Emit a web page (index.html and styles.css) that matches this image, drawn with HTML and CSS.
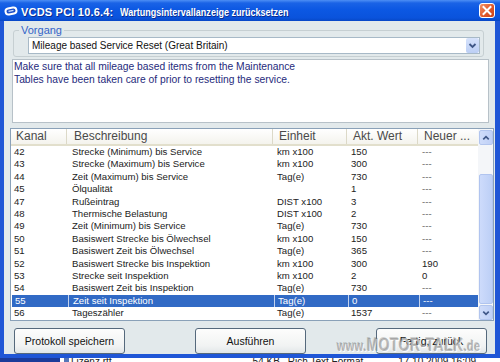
FILE: index.html
```html
<!DOCTYPE html>
<html lang="de">
<head>
<meta charset="utf-8">
<title>VCDS PCI 10.6.4</title>
<link rel="stylesheet" href="styles.css">
</head>
<body>
<div class="titlebar">
  <svg class="app-icon" viewBox="0 0 14 10" width="14" height="10">
    <rect x="1.5" y="2" width="11" height="6" rx="3" transform="rotate(-12 7 5)" fill="#1d4fc8" stroke="#fff" stroke-width="2"/>
    <line x1="4.5" y1="5.4" x2="9.5" y2="4.4" stroke="#cfe0ff" stroke-width="1.2"/>
  </svg>
  <span class="title"><span class="title-app">VCDS PCI 10.6.4:</span> <span class="title-dlg">Wartungsintervallanzeige zurücksetzen</span></span>
  <span class="close">
    <svg viewBox="0 0 14 13" width="14" height="13"><path d="M3.5 3 L10.5 10 M10.5 3 L3.5 10" stroke="#fff" stroke-width="2" stroke-linecap="square"/></svg>
  </span>
</div>
<div class="window">
  <fieldset class="group">
    <legend>Vorgang</legend>
    <div class="combo">
      <span class="combo-text">Mileage based Service Reset (Great Britain)</span>
      <span class="combo-btn"><svg viewBox="0 0 13 15" width="13" height="15"><path d="M3.5 6 L6.5 9 L9.5 6" fill="none" stroke="#3f5787" stroke-width="1.8"/></svg></span>
    </div>
  </fieldset>
  <div class="notes">Make sure that all mileage based items from the Maintenance<br>Tables have been taken care of prior to resetting the service.</div>
  <div class="list">
    <div class="list-main">
      <div class="row head">
        <div class="c">Kanal</div><div class="c">Beschreibung</div><div class="c">Einheit</div><div class="c">Akt. Wert</div><div class="c">Neuer ...</div>
      </div>
      <div class="row"><div class="c">42</div><div class="c">Strecke (Minimum) bis Service</div><div class="c">km x100</div><div class="c">150</div><div class="c dash">---</div></div>
      <div class="row"><div class="c">43</div><div class="c">Strecke (Maximum) bis Service</div><div class="c">km x100</div><div class="c">300</div><div class="c dash">---</div></div>
      <div class="row"><div class="c">44</div><div class="c">Zeit (Maximum) bis Service</div><div class="c">Tag(e)</div><div class="c">730</div><div class="c dash">---</div></div>
      <div class="row"><div class="c">45</div><div class="c">Ölqualität</div><div class="c"></div><div class="c">1</div><div class="c dash">---</div></div>
      <div class="row"><div class="c">47</div><div class="c">Rußeintrag</div><div class="c">DIST x100</div><div class="c">3</div><div class="c dash">---</div></div>
      <div class="row"><div class="c">48</div><div class="c">Thermische Belastung</div><div class="c">DIST x100</div><div class="c">2</div><div class="c dash">---</div></div>
      <div class="row"><div class="c">49</div><div class="c">Zeit (Minimum) bis Service</div><div class="c">Tag(e)</div><div class="c">730</div><div class="c dash">---</div></div>
      <div class="row"><div class="c">50</div><div class="c">Basiswert Strecke bis Ölwechsel</div><div class="c">km x100</div><div class="c">150</div><div class="c dash">---</div></div>
      <div class="row"><div class="c">51</div><div class="c">Basiswert Zeit bis Ölwechsel</div><div class="c">Tag(e)</div><div class="c">365</div><div class="c dash">---</div></div>
      <div class="row"><div class="c">52</div><div class="c">Basiswert Strecke bis Inspektion</div><div class="c">km x100</div><div class="c">300</div><div class="c">190</div></div>
      <div class="row"><div class="c">53</div><div class="c">Strecke seit Inspektion</div><div class="c">km x100</div><div class="c">2</div><div class="c">0</div></div>
      <div class="row"><div class="c">54</div><div class="c">Basiswert Zeit bis Inspektion</div><div class="c">Tag(e)</div><div class="c">730</div><div class="c dash">---</div></div>
      <div class="row sel"><div class="c">55</div><div class="c">Zeit seit Inspektion</div><div class="c">Tag(e)</div><div class="c">0</div><div class="c dash">---</div></div>
      <div class="row"><div class="c">56</div><div class="c">Tageszähler</div><div class="c">Tag(e)</div><div class="c">1537</div><div class="c dash">---</div></div>
    </div>
    <div class="scrollbar">
      <div class="sb-btn"><svg viewBox="0 0 13 14" width="13" height="14"><path d="M3.5 8.5 L6.5 5.5 L9.5 8.5" fill="none" stroke="#3f5787" stroke-width="1.8"/></svg></div>
      <div class="sb-track"><div class="sb-thumb"></div></div>
      <div class="sb-btn"><svg viewBox="0 0 13 14" width="13" height="14"><path d="M3.5 5.5 L6.5 8.5 L9.5 5.5" fill="none" stroke="#3f5787" stroke-width="1.8"/></svg></div>
    </div>
  </div>
  <div class="buttons">
    <div class="btn">Protokoll speichern</div>
    <div class="btn">Ausführen</div>
    <div class="btn">Fertig, zurück</div>
  </div>
</div>
<div class="strip">
  <div class="strip-left"></div>
  <div class="strip-main">
    <span class="file-icon"></span><span class="fname">Lizenz.rtf</span>
    <span class="fsize">54 KB</span><span class="ftype">Rich Text Format</span><span class="fdate">17.10.2009 16:09</span>
  </div>
</div>
<div class="watermark"><span class="www">www.</span>MOTOR-TALK<span class="www">.de</span></div>
</body>
</html>
```

FILE: styles.css
```css
* { box-sizing: border-box; }
html, body { margin: 0; padding: 0; }
body {
  width: 500px;
  height: 362px;
  overflow: hidden;
  background: #fff;
  font-family: "Liberation Sans", Arial, sans-serif;
  position: relative;
}

/* title bar */
.titlebar {
  height: 21px;
  display: flex;
  align-items: center;
  padding: 0 5px 0 4px;
  background: linear-gradient(#4d8ff5 0, #1a63e6 3px, #0c58e3 45%, #0a53dc 85%, #0747c6 100%);
}
.app-icon { flex: none; margin-right: 3px; margin-top: 1px; }
.title {
  flex: 1;
  color: #fff;
  font-weight: bold;
  font-size: 11px;
  white-space: nowrap;
  text-shadow: 1px 1px 0 #0a2c8e;
  padding-top: 2px;
}
.title-app { letter-spacing: 0.2px; }
.title-dlg {
  display: inline-block;
  margin-left: 3px;
  transform: scaleX(0.82);
  transform-origin: left center;
}
.close {
  flex: none;
  width: 16px;
  height: 15px;
  border: 1px solid #fff;
  border-radius: 3px;
  background: linear-gradient(135deg, #f3956b 0, #e0582a 55%, #c7411a 100%);
  display: flex;
  align-items: center;
  justify-content: center;
}

/* window body */
.window {
  border: solid #1f56d6;
  border-width: 0 5px 4px 4px;
  background: #e2e9eb;
  padding-top: 3px;
  height: 337px;
}

.group {
  margin: 0 11px 0 9px;
  padding: 0 3px 2px 0;
  border: 1px solid #c6cfd2;
  border-radius: 3px;
  min-width: 0;
}
.group legend {
  margin-left: 5px;
  padding: 0 2px;
  font-size: 11px;
  line-height: 12px;
  color: #3464c8;
}
.combo {
  margin: 1px 0 0 14px;
  height: 17px;
  background: #fff;
  border: 1px solid #a7b9c7;
  display: flex;
  align-items: center;
  justify-content: space-between;
}
.combo-text {
  font-size: 10px;
  color: #111;
  padding-left: 3px;
}
.combo-btn {
  width: 13px;
  height: 15px;
  background: linear-gradient(#d6e2fb, #bccff5);
  border-radius: 2px;
  display: flex;
}

.notes {
  margin: 2px 6px 0 8px;
  height: 64px;
  background: #fff;
  border: 1px solid #b7c1c8;
  padding: 0 0 0 1px;
  font-size: 10.3px;
  line-height: 13.3px;
  color: #262a7c;
}

/* list view */
.list {
  margin: 5px 1px 0 6px;
  height: 193px;
  border: 1px solid #8aa1b8;
  background: #fff;
  display: flex;
}
.list-main {
  width: 467px;
  flex: none;
  overflow: hidden;
}
.row {
  display: grid;
  grid-template-columns: 56px 206px 74px 71px 60px;
  height: 12.4px;
  line-height: 12.4px;
  font-size: 9.6px;
  color: #222;
}
.row .c {
  padding-left: 4px;
  white-space: nowrap;
  overflow: hidden;
}
.row .c:first-child { padding-left: 3px; }
.row .c:nth-child(2) { padding-left: 5px; }
.row .dash { color: #666; }

.row.head {
  height: 17px;
  line-height: 15px;
  font-size: 12px;
  color: #4a4a4a;
  background: linear-gradient(#ffffff, #f4f3ed);
  border-bottom: 2px solid #e2dfcc;
}
.row.head .c {
  padding-left: 6px;
  border-right: 1px solid #dcd9c8;
}
.row.head .c:first-child { padding-left: 5px; }
.row.head .c:nth-child(2) { padding-left: 7px; }
.row.head .c:last-child { border-right: 0; }

.row.sel {
  background: #316ac5;
  color: #fff;
  margin-left: 1px;
  width: 466px;
}
.row.sel .c { color: #fff; }
.row.sel .c + .c { box-shadow: inset 1px 0 0 #c4d3ee; }

/* scrollbar */
.scrollbar {
  width: 15px;
  flex: none;
  display: flex;
  flex-direction: column;
  background: #f4f6f9;
  padding: 1px 0 0 1px;
}
.sb-btn {
  height: 15px;
  flex: none;
  background: linear-gradient(90deg, #cfdcfa, #bfd0f6);
  border: 1px solid #b2c5ee;
  border-radius: 2px;
  display: flex;
}
.sb-track {
  flex: 1;
  padding: 29px 0 1px;
  display: flex;
}
.sb-thumb {
  flex: 1;
  background: linear-gradient(90deg, #cddbfb, #bccff6);
  border: 1px solid #b0c4ef;
  border-radius: 2px;
}

/* buttons */
.buttons {
  margin-top: 7px;
  padding: 0 8px 0 10px;
  display: flex;
  justify-content: space-between;
}
.btn {
  width: 111px;
  height: 26px;
  border: 1px solid #55697c;
  border-radius: 3px;
  background: linear-gradient(#fdfdfc, #f1f3f3 70%, #e1e6e8);
  font-size: 10.5px;
  color: #111;
  display: flex;
  align-items: center;
  justify-content: center;
}

/* strip below the window */
.strip {
  height: 4px;
  display: flex;
  overflow: hidden;
}
.strip-left {
  width: 60px;
  background: #1b3b9a;
}
.strip-main {
  flex: 1;
  display: flex;
  align-items: flex-start;
  font-size: 10px;
  line-height: 8px;
  color: #222;
  white-space: nowrap;
}
.file-icon {
  width: 5px;
  height: 4px;
  margin-left: 4px;
  background: #5575b8;
}
.fname { margin-left: 2px; }
.fsize { margin-left: 141px; }
.ftype { margin-left: 8px; }
.fdate { margin-left: 35px; }

/* watermark over the lower right corner */
.watermark {
  position: absolute;
  left: 337px;
  top: 335px;
  font-size: 18px;
  font-weight: bold;
  color: rgba(125, 125, 125, 0.5);
  text-shadow: 1px 1px 0 rgba(255, 255, 255, 0.85), -1px -1px 0 rgba(90, 90, 90, 0.25);
  white-space: nowrap;
  transform: scaleX(0.78);
  transform-origin: left top;
  letter-spacing: 0.5px;
}
.watermark .www { font-size: 14px; }
```
